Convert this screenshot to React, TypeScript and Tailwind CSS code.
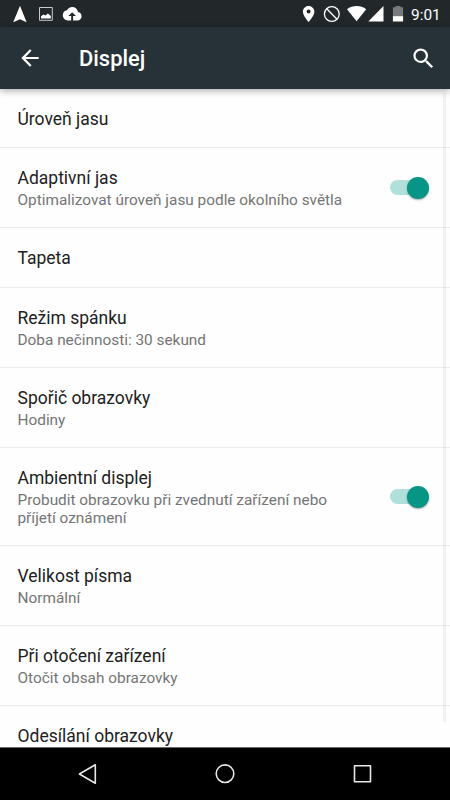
import { clsx } from 'clsx';

interface Setting {
  title: string;
  summary?: string;
  enabled?: boolean;
  height: string;
}

const settings: Setting[] = [
  { title: 'Úroveň jasu', height: 'h-[59px]' },
  {
    title: 'Adaptivní jas',
    summary: 'Optimalizovat úroveň jasu podle okolního světla',
    enabled: true,
    height: 'h-20',
  },
  { title: 'Tapeta', height: 'h-[60px]' },
  { title: 'Režim spánku', summary: 'Doba nečinnosti: 30 sekund', height: 'h-20' },
  { title: 'Spořič obrazovky', summary: 'Hodiny', height: 'h-20' },
  {
    title: 'Ambientní displej',
    summary: 'Probudit obrazovku při zvednutí zařízení nebo příjetí oznámení',
    enabled: true,
    height: 'h-[98px]',
  },
  { title: 'Velikost písma', summary: 'Normální', height: 'h-20' },
  { title: 'Při otočení zařízení', summary: 'Otočit obsah obrazovky', height: 'h-20' },
  { title: 'Odesílání obrazovky', height: 'h-[60px]' },
];

function StatusBar() {
  return (
    <div className="flex h-[27px] shrink-0 items-center bg-[#22272a] text-white">
      <svg className="h-[27px] w-[100px]" viewBox="0 0 100 27" fill="currentColor">
        <path d="M20 5.7 26.6 22.3 20 19.2 13.2 22.3Z" />
        <path d="M39.5 7.5h12.8v12.8H39.5z" fill="none" stroke="#c8cbcc" strokeWidth="1" />
        <path d="M41 18.4v-2.2l2.5-1.8 2 1.2 2.4-2.2 2.9 2.7v2.3z" />
        <path
          fillRule="evenodd"
          d="M78 11.9C77.4 9 75 7 72.2 7c-2.3 0-4.3 1.3-5.2 3.2-2.4.3-4.2 2.3-4.2 4.9 0 3.1 2.1 5.4 5 5.4h9.6c2.4 0 4.2-1.9 4.2-4.3 0-2.3-1.6-4.1-3.6-4.3zM73.1 16v4.5h-1.9V16h-2.8l3.8-3.7 3.8 3.7z"
        />
      </svg>
      <svg className="ml-auto h-[27px] w-[110px]" viewBox="300 0 110 27" fill="currentColor">
        <path
          fillRule="evenodd"
          d="M308.6 6c-3.2 0-5.7 2.5-5.7 5.6 0 4.2 5.7 10.5 5.7 10.5s5.8-6.3 5.8-10.5c0-3.1-2.6-5.6-5.8-5.6zm0 7.6a2 2 0 1 1 0-4 2 2 0 0 1 0 4z"
        />
        <g fill="none" stroke="currentColor" strokeWidth="1.3">
          <circle cx="331.8" cy="14" r="7.4" />
          <path d="m326.7 8.8 10.3 10.4" />
        </g>
        <path d="M347 9.2c5.5-4.4 13.7-4.4 19.2 0L356.6 21.3z" />
        <path d="M383.5 6v15.5H368.3z" />
        <path d="M395.5 6h5v1.3h2.6V17h-10.2V7.3h2.6z" fill="#77797a" />
        <path d="M392.9 16.2h10.2v5.3h-10.2z" />
      </svg>
      <span className="w-10 pt-[3px] pl-[1px] text-[15.4px] leading-6">9:01</span>
    </div>
  );
}

function Toolbar() {
  return (
    <header className="relative z-10 flex h-[62px] shrink-0 items-center bg-[#273238] text-white shadow-[0_2px_7px_rgba(0,0,0,0.32)]">
      <button aria-label="Zpět" className="ml-[17px]">
        <svg className="size-[26px]" viewBox="0 0 24 24" fill="currentColor">
          <path d="M20 11H7.83l5.59-5.59L12 4l-8 8 8 8 1.41-1.41L7.83 13H20v-2z" />
        </svg>
      </button>
      <h1 className="ml-9 pt-[2px] text-[21.9px] leading-7 font-medium">Displej</h1>
      <button aria-label="Hledat" className="mr-[13px] ml-auto">
        <svg className="size-[27px]" viewBox="0 0 24 24" fill="currentColor">
          <path d="M15.5 14h-.79l-.28-.27A6.47 6.47 0 0 0 16 9.5 6.5 6.5 0 1 0 9.5 16c1.61 0 3.09-.59 4.23-1.57l.27.28v.79l5 4.99L20.49 19l-4.99-5zm-6 0C7.01 14 5 11.99 5 9.5S7.01 5 9.5 5 14 7.01 14 9.5 11.99 14 9.5 14z" />
        </svg>
      </button>
    </header>
  );
}

function Toggle() {
  return (
    <span className="mr-[21px] flex h-[22px] w-[39px] shrink-0 items-center rounded-full">
      <span className="h-[15px] w-7 rounded-full bg-[#b1dfda]" />
      <span className="-ml-[11px] size-[22px] shrink-0 rounded-full bg-[#079586] shadow-[0_1px_2px_rgba(0,0,0,0.35)]" />
    </span>
  );
}

function SettingRow({ item }: { item: Setting }) {
  return (
    <li
      className={clsx(
        'flex shrink-0 items-center border-b border-[#ebebeb] pl-[17.5px]',
        item.height,
      )}
    >
      <div className="min-w-0 flex-1 pr-10">
        <p
          className={clsx(
            'text-[17.5px] leading-[23px] text-[#212121]',
            item.summary ? 'pt-[1px]' : 'pt-[2px]',
          )}
        >
          {item.title}
        </p>
        {item.summary && (
          <p className="-mr-10 max-w-[345px] pt-[1px] text-[15.36px] leading-[18px] text-[#757575]">
            {item.summary}
          </p>
        )}
      </div>
      {item.enabled && <Toggle />}
    </li>
  );
}

function NavigationBar() {
  return (
    <nav className="h-[53px] shrink-0 border-t border-[#6b6b6b] bg-black">
      <svg
        className="h-[52px] w-full"
        viewBox="0 1 450 52"
        fill="none"
        stroke="#e8e8e8"
        strokeWidth="1.6"
        strokeLinejoin="round"
      >
        <path d="M95.3 17.8v18.4L79.4 27z" />
        <circle cx="225" cy="26.7" r="8.8" />
        <path d="M354.5 18.7h16v16h-16z" />
      </svg>
    </nav>
  );
}

export default function App() {
  return (
    <div className="flex h-[800px] w-[450px] flex-col overflow-hidden bg-[#fefefe] font-['Roboto',sans-serif]">
      <StatusBar />
      <Toolbar />
      <main className="relative min-h-0 flex-1 overflow-hidden">
        <ul className="flex flex-col">
          {settings.map((item) => (
            <SettingRow key={item.title} item={item} />
          ))}
        </ul>
        {/* scroll indicator */}
        <div className="absolute top-1 right-[4px] h-[629px] w-[3px] bg-black/5" />
      </main>
      <NavigationBar />
    </div>
  );
}
